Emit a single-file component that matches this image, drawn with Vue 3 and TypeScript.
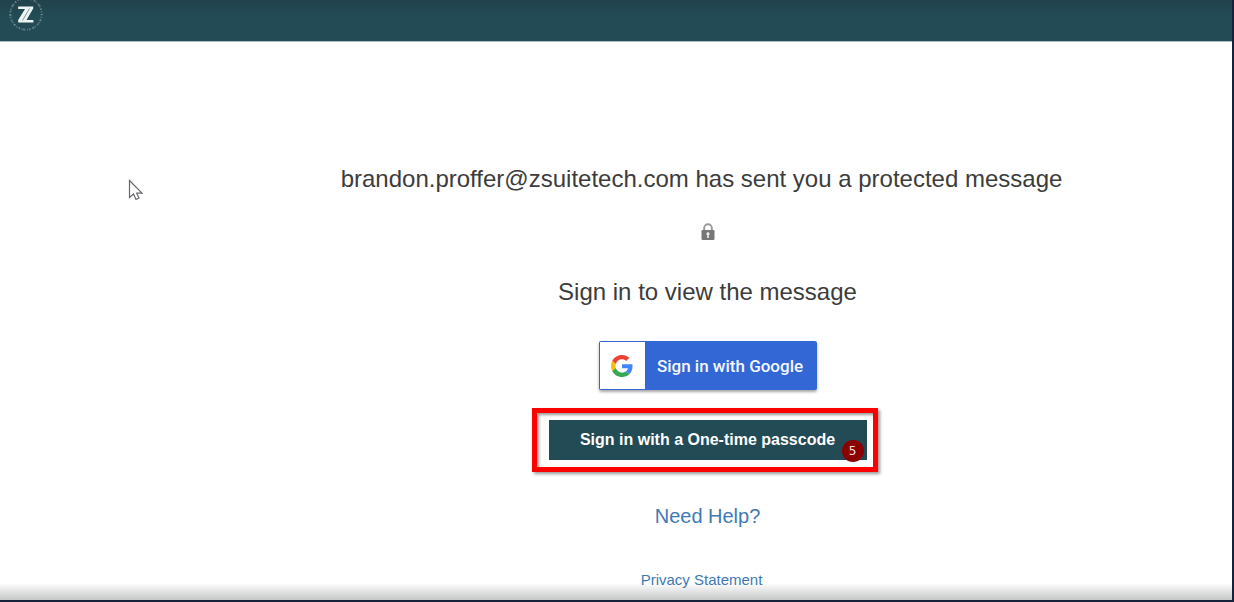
<script setup lang="ts">
const sender = 'brandon.proffer@zsuitetech.com'
const step = 5
</script>

<template>
  <div class="page">
    <header class="bar">
      <svg class="logo" viewBox="0 0 36 36" aria-hidden="true">
        <g fill="none" stroke="#a9bbbf" stroke-width="2">
          <circle cx="18" cy="18" r="15.700" stroke-dasharray="1.3 1.5" opacity=".35" />
          <circle cx="18" cy="18" r="15.700" stroke-dasharray="1 4.6 1.6 3.1" opacity=".4" />
        </g>
        <path d="M10.200 10.500H25.200V12.500L18.500 24H25.400V26.500H10.200V24L17 13H10.200Z" fill="#eef3f3" />
        <path d="M21.500 12.500L14.500 24.500" stroke="#5f7f85" stroke-width=".8" />
      </svg>
    </header>

    <main class="content">
      <h1 class="title shifted">{{ sender }} has sent you a protected message</h1>
      <svg class="lock" viewBox="0 0 14 18" aria-hidden="true">
        <path d="M3.200 8V5a3.800 3.800 0 0 1 7.600 0V8" fill="none" stroke="#999" stroke-width="1.900" />
        <rect x=".5" y="7" width="13" height="10" rx="1.200" fill="#777" />
        <path d="M7 9.200a1.600 1.600 0 0 1 .8 3V15H6.200v-2.800a1.600 1.600 0 0 1 .8-3Z" fill="#eee" />
      </svg>
      <h2 class="title">Sign in to view the message</h2>

      <button class="google" type="button">
        <span class="google-mark">
          <svg viewBox="0 0 48 48" aria-hidden="true">
            <path fill="#EA4335" d="M24 9.500c3.540 0 6.710 1.220 9.210 3.600l6.850-6.850C35.900 2.380 30.470 0 24 0 14.620 0 6.510 5.380 2.560 13.220l7.980 6.190C12.430 13.720 17.740 9.500 24 9.500z" />
            <path fill="#4285F4" d="M46.980 24.550c0-1.570-.15-3.090-.38-4.550H24v9.020h12.940c-.58 2.960-2.260 5.480-4.780 7.180l7.730 6c4.510-4.180 7.090-10.360 7.090-17.650z" />
            <path fill="#FBBC05" d="M10.530 28.590c-.48-1.450-.76-2.990-.76-4.590s.27-3.140.76-4.590l-7.980-6.190C.92 16.460 0 20.120 0 24s.92 7.540 2.560 10.780z" />
            <path fill="#34A853" d="M24 48c6.480 0 11.930-2.130 15.890-5.810l-7.730-6c-2.150 1.450-4.920 2.300-8.160 2.300-6.260 0-11.570-4.220-13.470-9.910l-7.980 6.190C6.510 42.620 14.620 48 24 48z" />
          </svg>
        </span>
        <span class="google-text">Sign in with Google</span>
      </button>

      <div class="highlight">
        <button class="passcode" type="button">Sign in with a One-time passcode</button>
        <span class="badge">{{ step }}</span>
      </div>

      <a class="help" href="#help">Need Help?</a>
      <a class="privacy shifted" href="#privacy">Privacy Statement</a>
    </main>

    <svg class="cursor" viewBox="0 0 16 23" aria-hidden="true">
      <path d="M1.500 1.500V18.500L5.500 15L8 20.500L11 19L8.700 14.200H14Z" fill="#fff" stroke="#66666c" stroke-width="1.200" />
    </svg>
    <div class="fade"></div>
  </div>
</template>

<style>
body {
  margin: 0;
}
</style>

<style scoped>
.page {
  position: relative;
  box-sizing: border-box;
  min-height: 100vh;
  border-right: 2px solid #16213a;
  border-bottom: 2px solid #16213a;
  background: #fff;
  font-family: "Liberation Sans", Arial, sans-serif;
}
.bar {
  box-sizing: border-box;
  height: 42px;
  overflow: hidden;
  padding-left: 8px;
  background: linear-gradient(#21424c, #224b55 16px);
  border-bottom: 1px solid #a9bcc0;
}
.logo {
  display: block;
  width: 36px;
  height: 36px;
  margin-top: -4px;
}
.content {
  display: flex;
  flex-direction: column;
  align-items: center;
  padding: 121px 0 8px 183px;
}
.title {
  margin: 0;
  font-size: 24px;
  line-height: 32px;
  font-weight: 400;
  color: #3c3c3c;
  white-space: nowrap;
}
.shifted {
  margin-right: 12px;
}
.lock {
  width: 14px;
  height: 18px;
  margin: 28px 0 35px;
}
.google {
  display: flex;
  width: 218px;
  height: 49px;
  margin-top: 33px;
  padding: 1px;
  border: 0;
  border-radius: 2px;
  background: #3367d6;
  box-shadow: 0 2px 3px rgba(0, 0, 0, 0.35);
  color: #f4f7ff;
  font: 500 17px/48px Roboto, sans-serif;
}
.google-mark {
  display: flex;
  align-items: center;
  align-self: stretch;
  justify-content: center;
  width: 45px;
  background: #fff;
}
.google-mark svg {
  width: 22px;
  height: 22px;
}
.google-text {
  flex: 1;
  text-align: center;
  white-space: nowrap;
}
.highlight {
  position: relative;
  box-sizing: border-box;
  width: 346px;
  margin: 18px 6px 0 0;
  padding: 7px 6px 7px 12px;
  border: 5px solid #fe0000;
  box-shadow: 2px 2px 3px rgba(0, 0, 0, 0.4), inset 2px 2px 3px rgba(0, 0, 0, 0.4);
}
.passcode {
  display: block;
  width: 100%;
  height: 40px;
  padding: 0;
  border: 0;
  background: #224b55;
  color: #fff;
  font: 700 16px/40px "Liberation Sans", Arial, sans-serif;
}
.badge {
  position: absolute;
  right: 9px;
  bottom: 5px;
  width: 22px;
  height: 22px;
  border-radius: 50%;
  background: #8b0000;
  color: #f3dede;
  font: 12px/22px "DejaVu Sans", sans-serif;
  text-align: center;
}
.help,
.privacy {
  color: #4179b4;
  text-decoration: none;
}
.help {
  margin-top: 32px;
  font-size: 20px;
  line-height: 24px;
}
.privacy {
  margin-top: 42px;
  font-size: 15px;
  line-height: 20px;
}
.cursor {
  position: absolute;
  left: 128px;
  top: 179px;
  width: 16px;
  height: 23px;
}
.fade {
  position: absolute;
  inset: auto 0 0;
  height: 17px;
  background: linear-gradient(rgba(60, 62, 66, 0), rgba(60, 62, 66, 0.29));
  pointer-events: none;
}
</style>
